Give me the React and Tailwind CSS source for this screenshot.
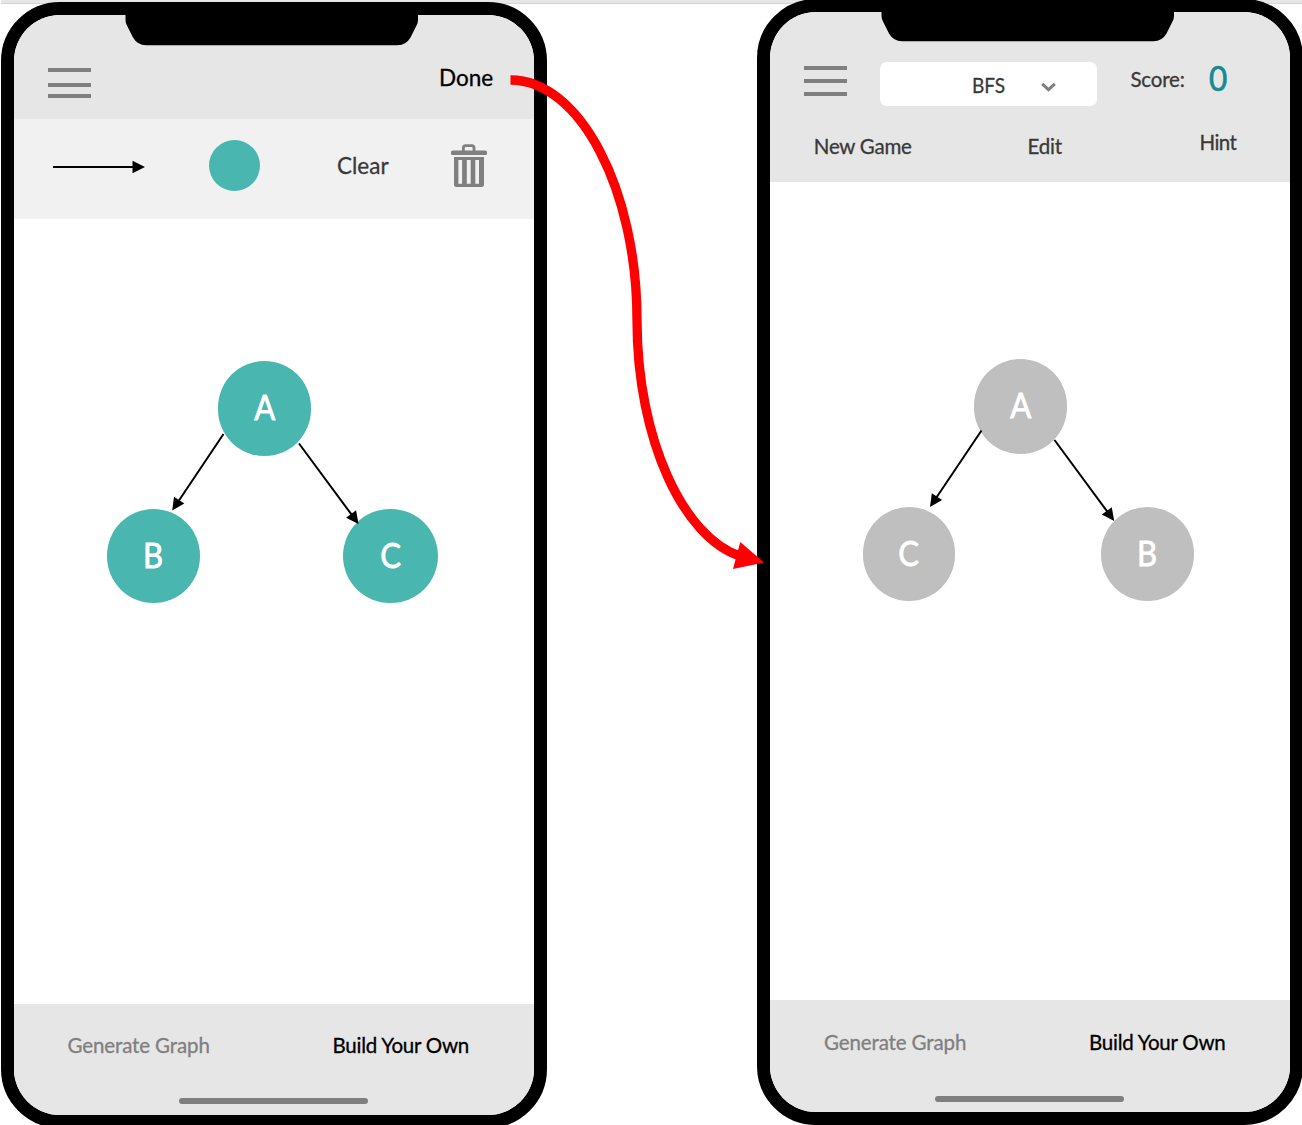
import React from "react";

const FONT = "font-['Lato','Carlito',sans-serif]";

function Notch({ className }) {
  return (
    <svg className={className} width="294" height="34" viewBox="0 0 294 34">
      <path
        d="M0.5 0V8Q0.6 11 2 13.5L8 25.5Q12.500 33.300 21 33.300H272.500Q281 33.300 285.500 25.500L291.500 13.500Q293 11 293 8V0Z"
        fill="#000"
      />
    </svg>
  );
}

function Phone({ className, notch, children }) {
  return (
    <section
      className={`relative flex h-[1126px] w-[546px] shrink-0 flex-col rounded-[59px] border-[13px] border-black bg-black ${className}`}
    >
      <div className="flex flex-1 flex-col overflow-hidden rounded-[46px] bg-white">{children}</div>
      <Notch className={`absolute ${notch}`} />
    </section>
  );
}

function Label({ className, children }) {
  return (
    <span className={`whitespace-nowrap [-webkit-text-stroke:0.3px_currentColor] ${className}`}>{children}</span>
  );
}

function Menu({ className, first, second }) {
  return (
    <button aria-label="Menu" className={`flex w-[43px] shrink-0 flex-col ${className}`}>
      <span className="h-1 w-full bg-[#7f7f7f]" />
      <span className={`h-1 w-full bg-[#7f7f7f] ${first}`} />
      <span className={`h-1 w-full bg-[#7f7f7f] ${second}`} />
    </button>
  );
}

function Trash() {
  return (
    <svg width="36" height="44" viewBox="451 144 36 44" className="ml-[61px] mt-[25px] shrink-0">
      <path
        d="M463.400 151V147.800Q463.400 145.600 465.600 145.600H471.800Q474 145.600 474 147.800V151"
        fill="none"
        stroke="#7f7f7f"
        strokeWidth="2.8"
      />
      <rect x="451" y="150.5" width="36" height="4.5" rx="1.5" fill="#7f7f7f" />
      <path
        fillRule="evenodd"
        fill="#7f7f7f"
        d="M454 157H484V184.500Q484 187 481.500 187H456.500Q454 187 454 184.500ZM458.400 160V183.700H462.100V160ZM466.800 160V183.700H470.700V160ZM475.300 160V183.700H479V160Z"
      />
    </svg>
  );
}

function Edge({ x1, y1, x2, y2 }) {
  const angle = (Math.atan2(y2 - y1, x2 - x1) * 180) / Math.PI;
  const length = Math.hypot(x2 - x1, y2 - y1);
  return (
    <g transform={`translate(${x1} ${y1}) rotate(${angle})`}>
      <line x1="0" y1="0" x2={length - 10} y2="0" stroke="#000" strokeWidth="2" />
      <path d={`M${length} 0L${length - 12.5} -6.2V6.2Z`} fill="#000" />
    </g>
  );
}

function Node({ className, children }) {
  return (
    <div
      className={`absolute flex items-center justify-center rounded-full pb-[2px] text-[34.5px] leading-none text-white ${className}`}
    >
      <Label className="inline-block scale-x-90 [-webkit-text-stroke:0.8px_currentColor]">{children}</Label>
    </div>
  );
}

function Footer({ className, tabs, bar }) {
  return (
    <footer className={`flex shrink-0 flex-col bg-[#e6e6e6] text-[20.5px] leading-none ${className}`}>
      <nav className={`flex ${tabs}`}>
        <Label className="w-[265px] tracking-[-0.12px] text-[#7f7f7f]">Generate Graph</Label>
        <Label className="tracking-[-0.25px] text-black">Build Your Own</Label>
      </nav>
      <div className={`ml-[165px] h-[5.5px] w-[189px] rounded-full bg-[#7f7f7f] ${bar}`} />
    </footer>
  );
}

function Editor() {
  return (
    <Phone className="ml-px mt-[-2px]" notch="left-[111px] top-[-3px]">
      <header className="flex h-[104px] shrink-0 items-start bg-[#e6e6e6]">
        <Menu className="ml-[34px] mt-[53px]" first="mt-[11px]" second="mt-[7px]" />
        <Label className="ml-[348px] mt-[52px] text-[22.5px] leading-none text-black">Done</Label>
      </header>
      <div className="flex h-[100px] shrink-0 items-start bg-[#f1f1f1]">
        <svg width="93" height="14" viewBox="0 0 93 14" className="ml-[39px] mt-[41px]">
          <Edge x1={0} y1={7} x2={92} y2={7} />
        </svg>
        <div className="ml-[62.5px] mt-[21px] size-[51px] rounded-full bg-[#49b6b0]" />
        <Label className="ml-[77.5px] mt-[36px] w-[53px] text-[22.5px] leading-none text-[#3b3838]">Clear</Label>
        <Trash />
      </div>
      <main className="relative flex-1">
        <Node className="left-[204px] top-[142px] h-[95px] w-[93px] bg-[#49b6b0]">A</Node>
        <Node className="left-[93px] top-[289.5px] h-[94.5px] w-[92.5px] bg-[#49b6b0]">B</Node>
        <Node className="left-[329px] top-[289.5px] h-[94.5px] w-[94.5px] bg-[#49b6b0]">C</Node>
        <svg className="absolute inset-0 size-full" viewBox="14 219 520 785">
          <Edge x1={223.5} y1={434} x2={172.2} y2={510.5} />
          <Edge x1={299} y1={443.5} x2={358.5} y2={524} />
        </svg>
      </main>
      <Footer className="h-[111px]" tabs="ml-[53.5px] mt-[31px]" bar="mt-[42.5px]" />
    </Phone>
  );
}

function Game() {
  return (
    <Phone className="ml-[210px] mt-[-5px]" notch="left-[111px] top-[-4px]">
      <header className="flex h-[169.5px] shrink-0 flex-col bg-[#e6e6e6] text-[20.5px] leading-none text-[#3b3838]">
        <div className="flex h-[94px] items-start">
          <Menu className="ml-[34px] mt-[54px]" first="mt-[9px]" second="mt-[9px]" />
          <button className="ml-[33px] mt-[50px] flex h-[44px] w-[217px] shrink-0 items-center rounded-[7px] bg-white">
            <Label className="ml-[92px] mt-[3px] w-[69px] origin-left scale-x-[0.93] text-left">BFS</Label>
            <svg width="15" height="9" viewBox="0 0 15 9" className="mt-[7px]">
              <path d="M1.2 0.8L7.5 6.6L13.8 0.8" fill="none" stroke="#7f7f7f" strokeWidth="3" />
            </svg>
          </button>
          <Label className="ml-[33.5px] mt-[57px] w-[77.5px] tracking-[-0.2px]">Score:</Label>
          <Label className="ml-[0.5px] mt-[48px] origin-left scale-x-[0.9] text-[35px] text-[#148a92] [-webkit-text-stroke:0.7px_currentColor]">
            0
          </Label>
        </div>
        <nav className="mt-[25.5px] flex items-start">
          <Label className="ml-[43.8px] mt-[4px] w-[213.7px] tracking-[-0.25px]">New Game</Label>
          <Label className="mt-[4px] w-[172px] tracking-[-0.2px]">Edit</Label>
          <Label className="tracking-[-0.6px]">Hint</Label>
        </nav>
      </header>
      <main className="relative flex-1">
        <Node className="left-[204px] top-[177.5px] h-[95px] w-[93px] bg-[#bfbfbf]">A</Node>
        <Node className="left-[92.7px] top-[325px] h-[94.5px] w-[92.5px] bg-[#bfbfbf]">C</Node>
        <Node className="left-[331px] top-[325px] h-[94.5px] w-[92.5px] bg-[#bfbfbf]">B</Node>
        <svg className="absolute inset-0 size-full" viewBox="770 181.5 520 818.5">
          <Edge x1={981.5} y1={430} x2={930} y2={506.5} />
          <Edge x1={1054.5} y1={439.5} x2={1114.2} y2={520.5} />
        </svg>
      </main>
      <Footer className="h-[112px]" tabs="ml-[54px] mt-[31.5px]" bar="mt-[44px]" />
    </Phone>
  );
}

export default function App() {
  return (
    <div className={`relative h-[1125px] w-[1302px] overflow-hidden bg-white ${FONT}`}>
      <div className="ml-px h-1 border-b border-[#d4d4d4] bg-[#e6e6e6]" />
      <div className="flex items-start">
        <Editor />
        <Game />
      </div>
      <svg className="pointer-events-none absolute left-0 top-0" width="1302" height="1125">
        <path
          d="M510.500 80C580 80 637 190 637 320C637 440 684 538 740 556"
          fill="none"
          stroke="#ff0000"
          strokeWidth="9.3"
        />
        <path d="M740.300 542L764 562.500L733 569Z" fill="#ff0000" />
      </svg>
    </div>
  );
}
